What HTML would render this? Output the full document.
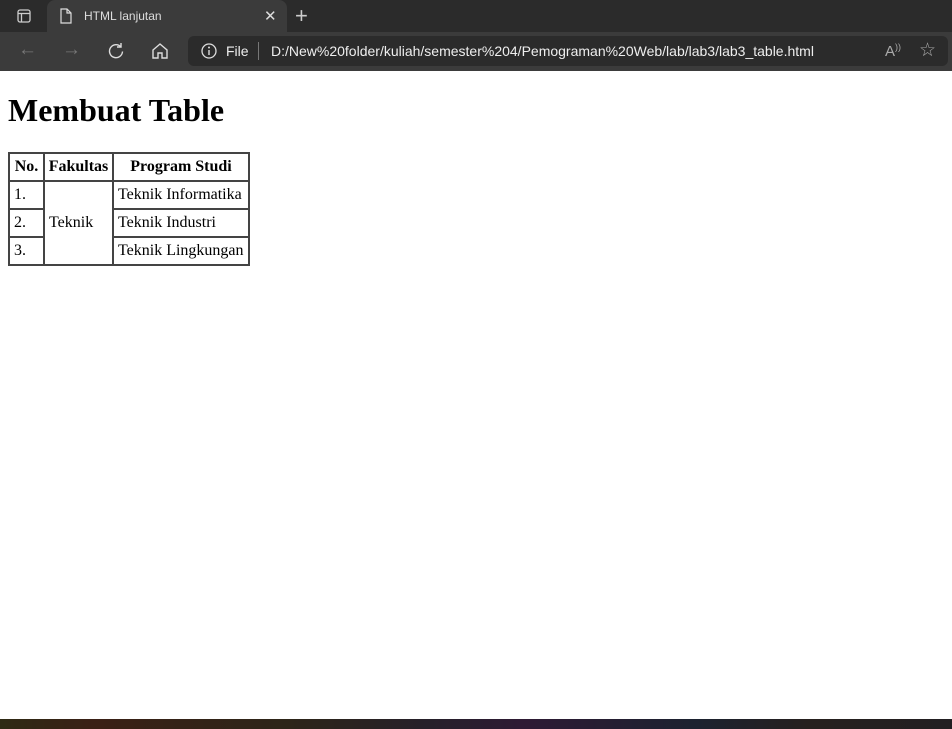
<!DOCTYPE html>
<html><head><meta charset="utf-8"><style>
*{margin:0;padding:0;box-sizing:border-box}
body{width:952px;height:729px;overflow:hidden;background:#fff;font-family:"Liberation Serif",serif;position:relative}
.tabs{position:absolute;left:0;top:0;width:952px;height:32px;background:#2b2b2b}
.tab{position:absolute;left:47px;top:0;width:240px;height:32px;background:#3b3b3b;border-radius:8px 8px 0 0;color:#ddd;font:12px "Liberation Sans",sans-serif}
.tool{position:absolute;left:0;top:32px;width:952px;height:39px;background:#3b3b3b}
.addr{position:absolute;left:188px;top:4px;width:760px;height:30px;background:#2b2b2b;border-radius:6px;color:#eee;font:14px "Liberation Sans",sans-serif}
.ui{position:absolute;color:#ccc;font-family:"Liberation Sans",sans-serif}
h1{position:absolute;left:8px;top:92px;font-size:32px;font-weight:bold;line-height:37px}
table{position:absolute;left:8px;top:152px;border-collapse:collapse;font-size:16px;table-layout:fixed;width:240px}
td,th{border:2px solid #444;height:28px;padding:0 4px;text-align:left;white-space:nowrap;overflow:hidden}
th{text-align:center;padding:0}
.bot{position:absolute;left:0;top:719px;width:952px;height:10px;background:linear-gradient(90deg,#2e2a14,#3a2016 10%,#2d2518 30%,#26202a 45%,#2e1a34 55%,#1c2230 73%,#26201e 85%,#221f22)}
</style></head><body>
<div class="tabs">
<svg style="position:absolute;left:17px;top:9px" width="14" height="14"><rect x="1" y="1" width="12" height="12" rx="2" fill="none" stroke="#ccc" stroke-width="1.3"/><line x1="1" y1="4.5" x2="13" y2="4.5" stroke="#ccc" stroke-width="1.3"/><line x1="4.5" y1="4.5" x2="4.5" y2="13" stroke="#ccc" stroke-width="1.3"/></svg>
<div class="tab">
<svg style="position:absolute;left:13px;top:8px" width="12" height="16"><path d="M1 1h6l4 4v10H1z M7 1v4h4" fill="none" stroke="#ddd" stroke-width="1.2"/></svg>
<span style="position:absolute;left:37px;top:9px">HTML lanjutan</span>
<span style="position:absolute;left:217px;top:7px;font-size:15px;color:#ddd">✕</span>
</div>
<span class="ui" style="left:295px;top:3px;font-size:22px;font-weight:200">+</span>
</div>
<div class="tool">
<span class="ui" style="left:18px;top:7px;font-size:19px;color:#777">←</span>
<span class="ui" style="left:62px;top:7px;font-size:19px;color:#777">→</span>
<svg style="position:absolute;left:107px;top:10px" width="18" height="18"><path d="M14 5A6.5 6.5 0 1 0 15.5 9.5" fill="none" stroke="#ddd" stroke-width="1.4"/><path d="M14 1v4h-4" fill="none" stroke="#ddd" stroke-width="1.4"/></svg>
<svg style="position:absolute;left:151px;top:10px" width="18" height="18"><path d="M2 8L9 2l7 6v8h-5v-5H7v5H2z" fill="none" stroke="#ddd" stroke-width="1.4"/></svg>
<div class="addr">
<svg style="position:absolute;left:13px;top:7px" width="16" height="16"><circle cx="8" cy="8" r="7" fill="none" stroke="#ddd" stroke-width="1.3"/><line x1="8" y1="7" x2="8" y2="12" stroke="#ddd" stroke-width="1.4"/><circle cx="8" cy="4.5" r="1" fill="#ddd"/></svg>
<span style="position:absolute;left:38px;top:7px">File</span>
<span style="position:absolute;left:70px;top:6px;width:1px;height:18px;background:#777"></span>
<span style="position:absolute;left:83px;top:7px">D:/New%20folder/kuliah/semester%204/Pemograman%20Web/lab/lab3/lab3_table.html</span>
<span style="position:absolute;left:697px;top:6px;color:#aaa;font-size:15px">A<sup style="font-size:9px">))</sup></span>
<span style="position:absolute;left:731px;top:3px;color:#aaa;font-size:19px">☆</span>
</div>
</div>
<h1>Membuat Table</h1>
<table>
<colgroup><col style="width:35px"><col style="width:69px"><col style="width:136px"></colgroup>
<tr><th>No.</th><th>Fakultas</th><th>Program Studi</th></tr>
<tr><td>1.</td><td rowspan="3">Teknik</td><td>Teknik Informatika</td></tr>
<tr><td>2.</td><td>Teknik Industri</td></tr>
<tr><td>3.</td><td>Teknik Lingkungan</td></tr>
</table>
<div class="bot"></div>
</body></html>
